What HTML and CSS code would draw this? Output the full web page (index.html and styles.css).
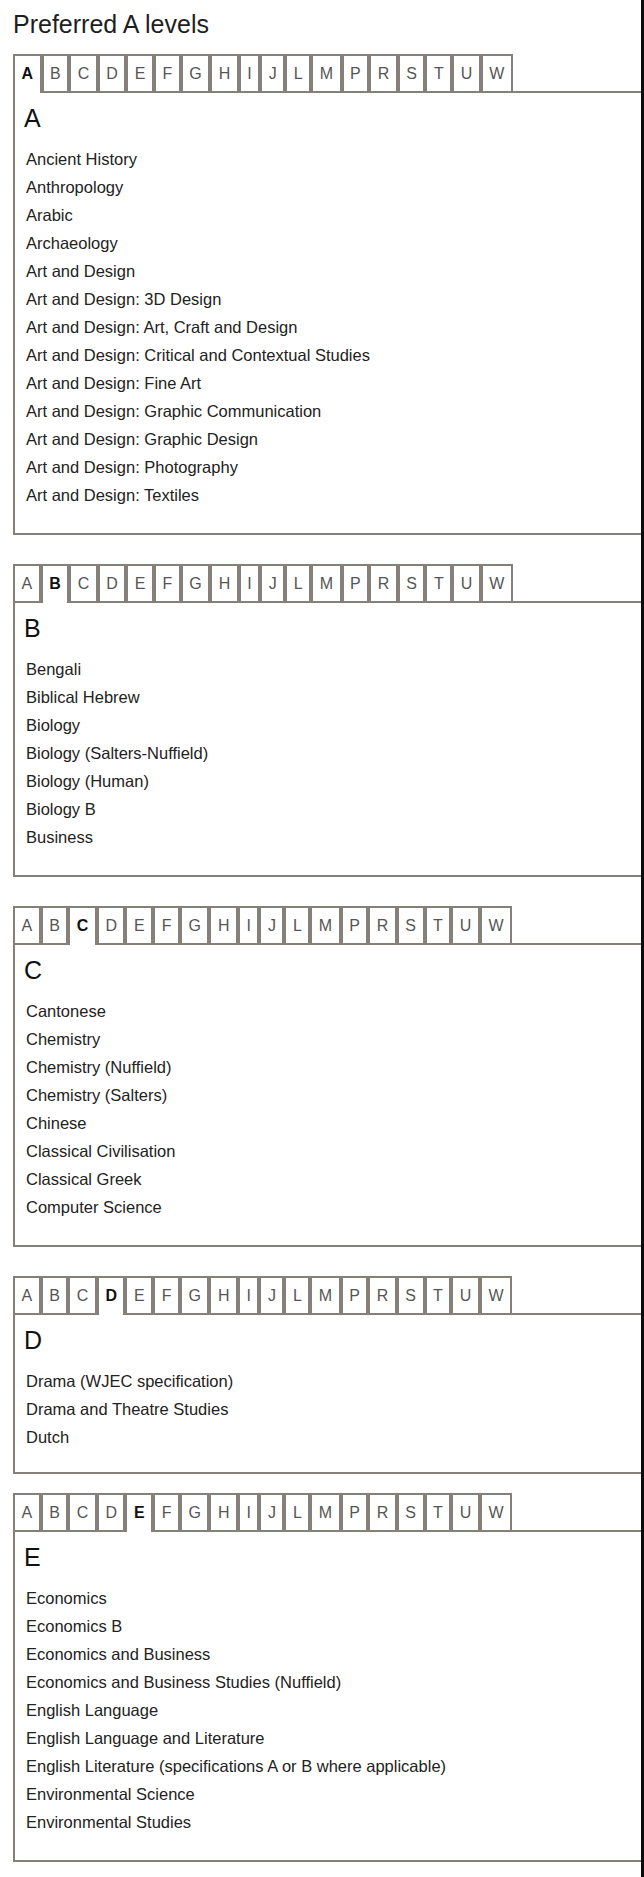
FILE: index.html
```html
<!DOCTYPE html>
<html lang="en">
<head>
    <meta charset="UTF-8">
    <meta name="viewport" content="width=device-width, initial-scale=1.0">
    <title>Preferred A levels</title>
    <link rel="stylesheet" href="styles.css">
</head>
<body>
    <div class="page">
        <h1>Preferred A levels</h1>

        <!-- A -->
        <section class="letter-block">
            <div class="tabs">
                <span class="tab active">A</span><span class="tab">B</span><span class="tab">C</span><span class="tab">D</span><span class="tab">E</span><span class="tab">F</span><span class="tab">G</span><span class="tab">H</span><span class="tab">I</span><span class="tab">J</span><span class="tab">L</span><span class="tab">M</span><span class="tab">P</span><span class="tab">R</span><span class="tab">S</span><span class="tab">T</span><span class="tab">U</span><span class="tab">W</span>
            </div>
            <div class="panel">
                <h2>A</h2>
                <ul class="subjects">
                    <li>Ancient History</li>
                    <li>Anthropology</li>
                    <li>Arabic</li>
                    <li>Archaeology</li>
                    <li>Art and Design</li>
                    <li>Art and Design: 3D Design</li>
                    <li>Art and Design: Art, Craft and Design</li>
                    <li>Art and Design: Critical and Contextual Studies</li>
                    <li>Art and Design: Fine Art</li>
                    <li>Art and Design: Graphic Communication</li>
                    <li>Art and Design: Graphic Design</li>
                    <li>Art and Design: Photography</li>
                    <li>Art and Design: Textiles</li>
                </ul>
            </div>
        </section>

        <!-- B -->
        <section class="letter-block">
            <div class="tabs">
                <span class="tab">A</span><span class="tab active">B</span><span class="tab">C</span><span class="tab">D</span><span class="tab">E</span><span class="tab">F</span><span class="tab">G</span><span class="tab">H</span><span class="tab">I</span><span class="tab">J</span><span class="tab">L</span><span class="tab">M</span><span class="tab">P</span><span class="tab">R</span><span class="tab">S</span><span class="tab">T</span><span class="tab">U</span><span class="tab">W</span>
            </div>
            <div class="panel">
                <h2>B</h2>
                <ul class="subjects">
                    <li>Bengali</li>
                    <li>Biblical Hebrew</li>
                    <li>Biology</li>
                    <li>Biology (Salters-Nuffield)</li>
                    <li>Biology (Human)</li>
                    <li>Biology B</li>
                    <li>Business</li>
                </ul>
            </div>
        </section>

        <!-- C -->
        <section class="letter-block">
            <div class="tabs">
                <span class="tab">A</span><span class="tab">B</span><span class="tab active">C</span><span class="tab">D</span><span class="tab">E</span><span class="tab">F</span><span class="tab">G</span><span class="tab">H</span><span class="tab">I</span><span class="tab">J</span><span class="tab">L</span><span class="tab">M</span><span class="tab">P</span><span class="tab">R</span><span class="tab">S</span><span class="tab">T</span><span class="tab">U</span><span class="tab">W</span>
            </div>
            <div class="panel">
                <h2>C</h2>
                <ul class="subjects">
                    <li>Cantonese</li>
                    <li>Chemistry</li>
                    <li>Chemistry (Nuffield)</li>
                    <li>Chemistry (Salters)</li>
                    <li>Chinese</li>
                    <li>Classical Civilisation</li>
                    <li>Classical Greek</li>
                    <li>Computer Science</li>
                </ul>
            </div>
        </section>

        <!-- D -->
        <section class="letter-block letter-block--short">
            <div class="tabs">
                <span class="tab">A</span><span class="tab">B</span><span class="tab">C</span><span class="tab active">D</span><span class="tab">E</span><span class="tab">F</span><span class="tab">G</span><span class="tab">H</span><span class="tab">I</span><span class="tab">J</span><span class="tab">L</span><span class="tab">M</span><span class="tab">P</span><span class="tab">R</span><span class="tab">S</span><span class="tab">T</span><span class="tab">U</span><span class="tab">W</span>
            </div>
            <div class="panel">
                <h2>D</h2>
                <ul class="subjects">
                    <li>Drama (WJEC specification)</li>
                    <li>Drama and Theatre Studies</li>
                    <li>Dutch</li>
                </ul>
            </div>
        </section>

        <!-- E -->
        <section class="letter-block">
            <div class="tabs">
                <span class="tab">A</span><span class="tab">B</span><span class="tab">C</span><span class="tab">D</span><span class="tab active">E</span><span class="tab">F</span><span class="tab">G</span><span class="tab">H</span><span class="tab">I</span><span class="tab">J</span><span class="tab">L</span><span class="tab">M</span><span class="tab">P</span><span class="tab">R</span><span class="tab">S</span><span class="tab">T</span><span class="tab">U</span><span class="tab">W</span>
            </div>
            <div class="panel">
                <h2>E</h2>
                <ul class="subjects">
                    <li>Economics</li>
                    <li>Economics B</li>
                    <li>Economics and Business</li>
                    <li>Economics and Business Studies (Nuffield)</li>
                    <li>English Language</li>
                    <li>English Language and Literature</li>
                    <li>English Literature (specifications A or B where applicable)</li>
                    <li>Environmental Science</li>
                    <li>Environmental Studies</li>
                </ul>
            </div>
        </section>
    </div>
</body>
</html>
```

FILE: styles.css
```css
body {
    margin: 0;
    font-family: 'Liberation Sans', Arial, sans-serif;
    color: #222;
    background: #fff;
}

.page {
    min-height: 100vh;
    box-sizing: border-box;
    padding: 10px 0 0 13px;
    border-right: 3px solid #0b0b0b;
    overflow: hidden;
}

h1 {
    font-size: 25px;
    font-weight: normal;
    line-height: 28px;
    margin: 0 0 16px;
    color: #1e1e1e;
}

.letter-block {
    margin-right: -4px;
    margin-bottom: 29px;
}

/* the D block sits a little tighter in the original */
.letter-block--short {
    margin-bottom: 19px;
}

.letter-block--short .panel {
    padding-bottom: 21px;
}

.tabs {
    display: flex;
    align-items: flex-start;
}

.tab {
    height: 37px;
    box-sizing: border-box;
    padding: 0 6.5px;
    border: 2px solid #858079;
    border-bottom: 0;
    font-size: 16px;
    line-height: 35px;
    color: #555;
    background: #fff;
}

.tab.active {
    height: 39px;
    margin-bottom: -2px;
    position: relative;
    z-index: 1;
    font-weight: bold;
    color: #111;
}

.panel {
    border: 2px solid #858079;
    padding: 10px 9px 24px 9px;
}

h2 {
    font-size: 25px;
    font-weight: normal;
    line-height: 30px;
    margin: 0 0 12px;
    color: #111;
}

.subjects {
    list-style: none;
    margin: 0;
    padding: 0 0 0 2px;
    font-size: 16.5px;
    line-height: 28px;
}
```
